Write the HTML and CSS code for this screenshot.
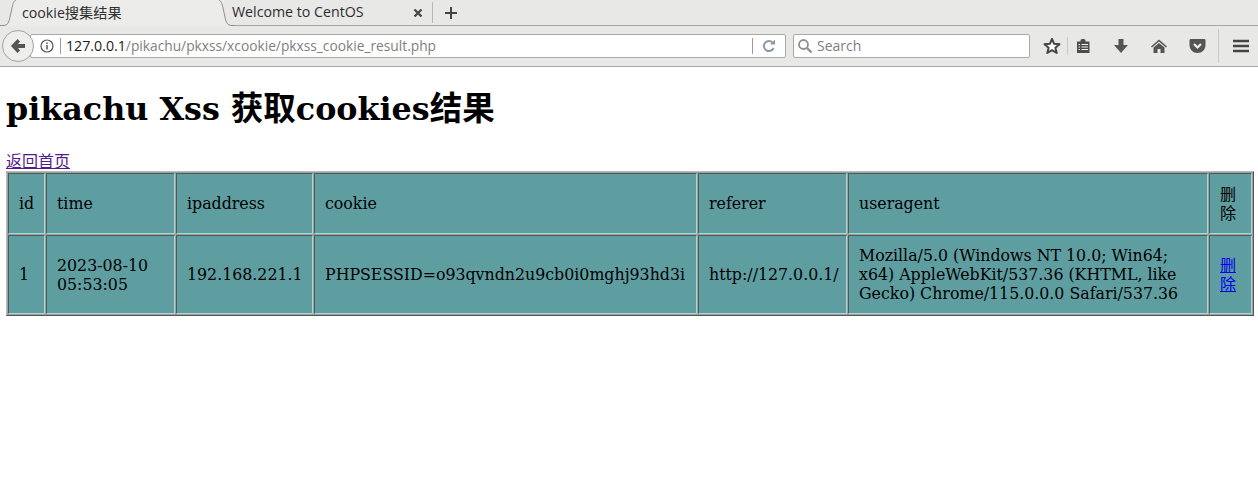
FILE: index.html
```html
<!DOCTYPE html>
<html lang="zh">
<head>
<meta charset="utf-8">
<title>cookie搜集结果</title>
<link rel="stylesheet" href="styles.css">
</head>
<body>
<header class="chrome">
  <div class="tabbar">
    <div class="tab tab-active">
      <svg class="tab-curve tab-curve-left" width="22" height="26" viewBox="0 0 22 26"><path d="M0 25.5H3C8 25.5 9 22 10 17L12 8C13 3 14 .5 16 .5H22V26H0Z" fill="#ececeb"/><path d="M0 25.5H3C8 25.5 9 22 10 17L12 8C13 3 14 .5 16 .5" fill="none" stroke="#8e8e8c"/></svg>
      <span class="tab-title">cookie搜集结果</span>
      <svg class="tab-close" width="10" height="10" viewBox="0 0 10 10"><path d="M1.5 1.5L8.500 8.500M8.500 1.500L1.500 8.500" stroke="#4a4a4a" stroke-width="2.400"/></svg>
      <svg class="tab-curve tab-curve-right" width="22" height="26" viewBox="0 0 22 26"><path d="M22 25.500H19C14 25.500 13 22 12 17L10 8C9 3 8 .5 6 .5H0V26H22Z" fill="#ececeb"/><path d="M22 25.500H19C14 25.500 13 22 12 17L10 8C9 3 8 .5 6 .5" fill="none" stroke="#8e8e8c"/></svg>
    </div>
    <div class="tab tab-idle">
      <span class="tab-title">Welcome to CentOS</span>
      <svg class="tab-close" width="10" height="10" viewBox="0 0 10 10"><path d="M1.5 1.5L8.500 8.500M8.500 1.500L1.500 8.500" stroke="#4a4a4a" stroke-width="2.400"/></svg>
    </div>
    <div class="tab-new">
      <svg width="14" height="14" viewBox="0 0 14 14"><path d="M7 1V13M1 7H13" stroke="#444" stroke-width="2"/></svg>
    </div>
  </div>
  <div class="toolbar">
    <div class="urlbar">
      <svg class="info-icon" width="14" height="14" viewBox="0 0 14 14"><circle cx="7" cy="7" r="6" fill="none" stroke="#555" stroke-width="1.200"/><path d="M7 6V10.500M7 3.500V5" stroke="#555" stroke-width="1.500"/></svg>
      <span class="url-sep"></span>
      <span class="url"><span class="url-host">127.0.0.1</span>/pikachu/pkxss/xcookie/pkxss_cookie_result.php</span>
      <span class="url-sep url-sep-end"></span>
      <svg class="reload" width="14" height="14" viewBox="0 0 14 14"><path d="M11.500 9A5 5 0 1 1 10.500 3.500" fill="none" stroke="#8a99a8" stroke-width="2"/><path d="M8 5.500H13V.5Z" fill="#8a99a8"/></svg>
    </div>
    <button class="back" type="button" aria-label="Back">
      <svg width="16" height="16" viewBox="0 0 16 16"><path d="M7.500 1L1 8L7.500 15L10 12.500L8 10H15V6H8L10 3.500Z" fill="#555"/></svg>
    </button>
    <div class="searchbar">
      <svg width="16" height="16" viewBox="0 0 16 16"><circle cx="6.500" cy="6.500" r="4.500" fill="none" stroke="#8f8f8f" stroke-width="1.800"/><path d="M10 10L14.500 14.500" stroke="#8f8f8f" stroke-width="2.400"/></svg>
      <span class="search-text">Search</span>
    </div>
    <div class="tools">
      <svg class="tool tool-star" width="18" height="18" viewBox="0 0 18 18"><path d="M9 1.800L11.100 6.800L16.500 7.200L12.400 10.700L13.700 16L9 13.200L4.300 16L5.600 10.700L1.500 7.200L6.900 6.800Z" fill="#fff" stroke="#444" stroke-width="2" stroke-linejoin="round"/></svg>
      <span class="tool-sep"></span>
      <svg class="tool tool-list" width="16" height="16" viewBox="0 0 16 16"><path d="M2 3.500H5.500V2.500C5.500 1.500 6.500 1 8 1S10.500 1.500 10.500 2.500V3.500H14.500V15H2Z" fill="#4d4d4d"/><path d="M3.500 6.500H5M6.500 6.500H13M3.500 9H5M6.500 9H13M3.500 11.500H5M6.500 11.500H13" stroke="#f3f3f3"/></svg>
      <svg class="tool tool-down" width="16" height="16" viewBox="0 0 16 16"><path d="M5.500 1H10.500V7H15L8 15L1 7H5.500Z" fill="#555"/></svg>
      <svg class="tool tool-home" width="18" height="16" viewBox="0 0 18 16"><path d="M9 1.500L1 8.500L2 9.500L9 3.500L16 9.500L17 8.500Z" fill="#555"/><path d="M9 5L3.500 9.500V15H7.500V11H10.500V15H14.500V9.500Z" fill="#555"/></svg>
      <svg class="tool tool-pocket" width="17" height="16" viewBox="0 0 17 16"><path d="M2 1H15C16 1 16.500 1.500 16.500 2.500V7C16.500 11.500 13 15 8.500 15S.5 11.500 .5 7V2.500C.5 1.500 1 1 2 1Z" fill="#555"/><path d="M5 6L8.500 9.500L12 6" fill="none" stroke="#f0f0f0" stroke-width="2.200"/></svg>
      <span class="tool-sep tool-sep-tall"></span>
      <svg class="tool tool-menu" width="16" height="14" viewBox="0 0 16 14"><path d="M0 2H16M0 7H16M0 12H16" stroke="#444" stroke-width="2.500"/></svg>
    </div>
  </div>
</header>
<main class="page">
  <h1 class="title">pikachu Xss <span class="cjk">获取</span>cookies<span class="cjk">结果</span></h1>
  <a class="home-link" href="#">返回首页</a>
  <table class="results">
    <tr>
      <td class="c-id">id</td>
      <td class="c-time">time</td>
      <td class="c-ip">ipaddress</td>
      <td class="c-cookie">cookie</td>
      <td class="c-ref">referer</td>
      <td class="c-ua">useragent</td>
      <td class="c-del"><span class="del-text">删除</span></td>
    </tr>
    <tr>
      <td>1</td>
      <td>2023-08-10 05:53:05</td>
      <td>192.168.221.1</td>
      <td>PHPSESSID=o93qvndn2u9cb0i0mghj93hd3i</td>
      <td>http://127.0.0.1/</td>
      <td>Mozilla/5.0 (Windows NT 10.0; Win64; x64) AppleWebKit/537.36 (KHTML, like Gecko) Chrome/115.0.0.0 Safari/537.36</td>
      <td><a class="del-link del-text" href="#">删除</a></td>
    </tr>
  </table>
</main>
</body>
</html>
```
FILE: styles.css
```css
* { box-sizing: border-box; }
html, body { margin: 0; padding: 0; background: #fff; }
body { font-family: "DejaVu Serif", "Noto Sans CJK SC", serif; color: #000; height: 504px; overflow: hidden; }

.chrome { font-family: "Open Sans", "Noto Sans CJK SC", sans-serif; background: #e8e8e7; height: 67px; border-bottom: 1px solid #a8a8a6; color: #2e2e2e; }
.tabbar { height: 26px; display: flex; align-items: stretch; border-bottom: 1px solid #a5a5a3; }
.tab { display: flex; align-items: center; position: relative; font-size: 14.2px; }
.tab-title { white-space: nowrap; padding-bottom: 2px; }
.tab-active { width: 213px; height: 26px; background: #ececeb; margin-left: 11px; padding-left: 11px; padding-right: 0; justify-content: space-between; }
.tab-idle { width: 208px; padding-left: 8px; padding-right: 9px; justify-content: space-between; }
.tab-curve { position: absolute; top: 0; }
.tab-curve-left { left: -11px; }
.tab-curve-right { right: -11px; }
.tab-new { border-left: 1px solid #b8b8b6; height: 21px; margin-top: 2px; padding-left: 11px; display: flex; align-items: center; }

.toolbar { height: 40px; display: flex; align-items: center; position: relative; padding-left: 30px; }
.back { position: absolute; left: 2px; top: 4px; width: 32px; height: 32px; border-radius: 50%; border: 1px solid #a3a3a1; background: #eeeeed; padding: 0; display: flex; align-items: center; justify-content: center; }
.urlbar { width: 756px; height: 24px; background: #fff; border: 1px solid #a8a8a6; border-radius: 2px; display: flex; align-items: center; padding-left: 9px; font-size: 13.75px; color: #808080; }
.info-icon { flex: none; }
.url-sep { width: 1px; height: 16px; background: #9a9a9a; margin-left: 6px; margin-right: 5px; flex: none; }
.url { white-space: nowrap; flex: 1; padding-bottom: 2px; }
.url-host { color: #1a1a1a; font-size: 14.2px; }
.url-sep-end { margin-right: 9px; margin-left: 0; }
.reload { flex: none; margin-right: 9px; }
.searchbar { width: 237px; height: 24px; margin-left: 7px; background: #fff; border: 1px solid #a8a8a6; border-radius: 2px; display: flex; align-items: center; padding-left: 3px; gap: 4px; font-size: 14px; color: #808080; }
.search-text { padding-bottom: 2px; }
.tools { display: flex; align-items: center; margin-left: 13px; flex: 1; }
.tool { flex: none; }
.tool-sep { width: 1px; height: 18px; background: #c9c9c7; margin-left: 6px; margin-right: 7px; flex: none; }
.tool-sep-tall { height: 34px; margin-left: 12px; margin-right: 14px; }
.tool-down { margin-left: 22px; }
.tool-home { margin-left: 21px; }
.tool-pocket { margin-left: 21px; }

.page { padding: 0 4px 0 6px; }
.title { font-size: 31.75px; font-weight: 700; line-height: 38px; margin: 23px 0 24px; white-space: nowrap; }
.cjk { font-size: 32.5px; }
.home-link { display: block; font-size: 16px; line-height: 19px; height: 19px; color: #551a8b; text-decoration: underline; }
.results { background: #a0a0a0; width: 1248px; border-collapse: separate; border-spacing: 1px; border: 1px solid; border-color: #b4bcbc #555 #555 #b4bcbc; font-size: 15.8px; line-height: 19px; table-layout: fixed; }
.results td { padding: 10px; background: #5f9ea0; border: 1px solid; border-color: #4c5a5a #a6d6d6 #a6d6d6 #4c5a5a; }
.del-text { font-size: 16px; }
.c-id { width: 37px; height: 61px; }
.c-time { width: 129px; }
.c-ip { width: 137px; }
.c-cookie { width: 383px; }
.c-ref { width: 149px; }
.c-ua { width: 360px; }
.c-del { width: 43px; }
.del-link { color: #0000ee; text-decoration: underline; }
```
